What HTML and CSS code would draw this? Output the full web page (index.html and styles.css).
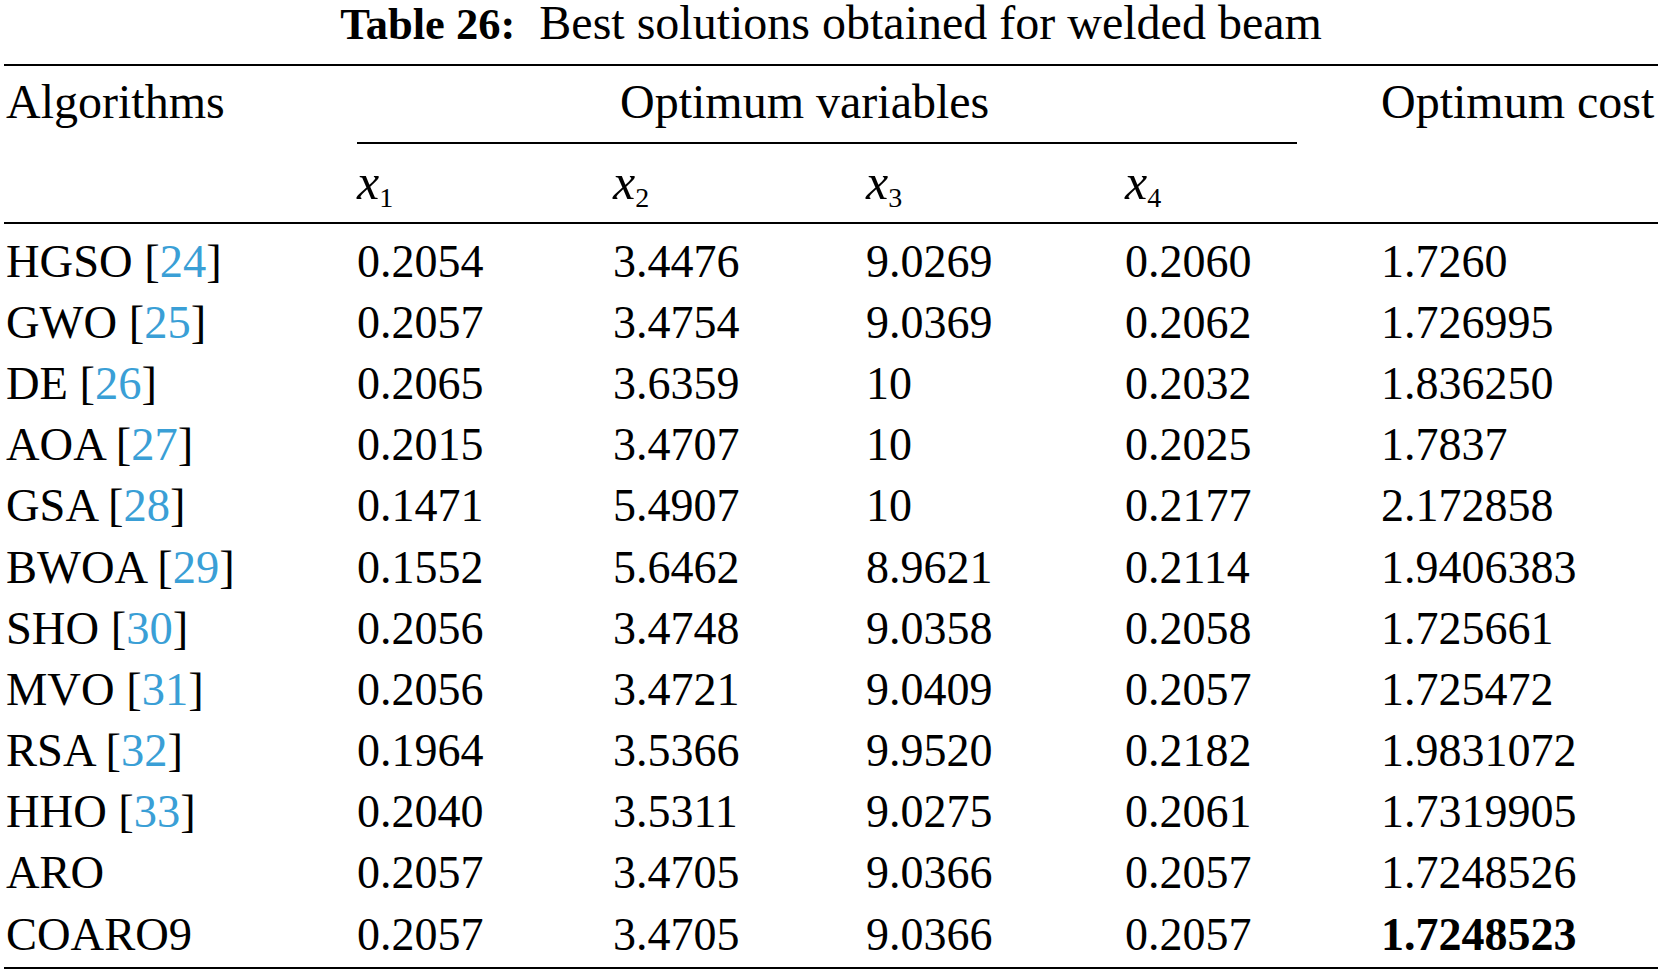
FILE: index.html
```html
<!DOCTYPE html>
<html lang="en">
<head>
<meta charset="utf-8">
<title>Table 26: Best solutions obtained for welded beam</title>
<link rel="stylesheet" href="styles.css">
</head>
<body>
<div class="page">
  <div class="caption"><span class="cap-label">Table 26:</span><span class="cap-text">Best solutions obtained for welded beam</span></div>
  <div class="rule"></div>
  <div class="head">
    <div class="h-alg">Algorithms</div>
    <div class="h-vars">Optimum variables</div>
    <div class="h-cost">Optimum cost</div>
    <div class="h-mid"></div>
    <div class="h-x"><i>x</i><sub>1</sub></div>
    <div class="h-x"><i>x</i><sub>2</sub></div>
    <div class="h-x"><i>x</i><sub>3</sub></div>
    <div class="h-x"><i>x</i><sub>4</sub></div>
  </div>
  <div class="rule"></div>
  <div class="body">
    <div class="alg">HGSO [<a class="ref">24</a>]</div><div>0.2054</div><div>3.4476</div><div>9.0269</div><div>0.2060</div><div>1.7260</div>
    <div class="alg">GWO [<a class="ref">25</a>]</div><div>0.2057</div><div>3.4754</div><div>9.0369</div><div>0.2062</div><div>1.726995</div>
    <div class="alg">DE [<a class="ref">26</a>]</div><div>0.2065</div><div>3.6359</div><div>10</div><div>0.2032</div><div>1.836250</div>
    <div class="alg">AOA [<a class="ref">27</a>]</div><div>0.2015</div><div>3.4707</div><div>10</div><div>0.2025</div><div>1.7837</div>
    <div class="alg">GSA [<a class="ref">28</a>]</div><div>0.1471</div><div>5.4907</div><div>10</div><div>0.2177</div><div>2.172858</div>
    <div class="alg">BWOA [<a class="ref">29</a>]</div><div>0.1552</div><div>5.6462</div><div>8.9621</div><div>0.2114</div><div>1.9406383</div>
    <div class="alg">SHO [<a class="ref">30</a>]</div><div>0.2056</div><div>3.4748</div><div>9.0358</div><div>0.2058</div><div>1.725661</div>
    <div class="alg">MVO [<a class="ref">31</a>]</div><div>0.2056</div><div>3.4721</div><div>9.0409</div><div>0.2057</div><div>1.725472</div>
    <div class="alg">RSA [<a class="ref">32</a>]</div><div>0.1964</div><div>3.5366</div><div>9.9520</div><div>0.2182</div><div>1.9831072</div>
    <div class="alg">HHO [<a class="ref">33</a>]</div><div>0.2040</div><div>3.5311</div><div>9.0275</div><div>0.2061</div><div>1.7319905</div>
    <div class="alg">ARO</div><div>0.2057</div><div>3.4705</div><div>9.0366</div><div>0.2057</div><div>1.7248526</div>
    <div class="alg">COARO9</div><div>0.2057</div><div>3.4705</div><div>9.0366</div><div>0.2057</div><div class="best">1.7248523</div>
  </div>
  <div class="rule"></div>
</div>
</body>
</html>
```

FILE: styles.css
```css
html, body {
  margin: 0;
  padding: 0;
  background: #ffffff;
}

body {
  font-family: "Liberation Serif", "Times New Roman", serif;
  color: #000000;
}

.page {
  width: 1654px;
  margin: 0 4px;
}

.caption {
  font-size: 48px;
  line-height: 44px;
  height: 44px;
  padding-top: 1px;
  text-align: center;
  white-space: nowrap;
  margin-bottom: 19px;
}

.cap-label {
  font-weight: bold;
  font-size: 44.5px;
  margin-right: 24px;
}

.rule {
  height: 2px;
  background: #000000;
}

.head,
.body {
  display: grid;
  grid-template-columns: 353px 256px 253px 259px 256px 1fr;
}

.head {
  font-size: 48px;
  line-height: 46px;
  grid-template-rows: 76px 2px 78px;
  white-space: nowrap;
}

.h-alg {
  grid-column: 1;
  grid-row: 1 / 4;
  padding: 13px 0 0 2px;
}

.h-vars {
  grid-column: 2 / 6;
  grid-row: 1;
  padding: 13px 0 0 263px;
}

.h-cost {
  grid-column: 6;
  grid-row: 1;
  padding-top: 13px;
}

.h-mid {
  grid-column: 2 / 6;
  grid-row: 2;
  background: #000000;
  margin-right: 84px;
}

.h-x {
  grid-row: 3;
  padding-top: 15px;
  font-size: 50px;
}

.h-x sub {
  font-size: 28px;
  line-height: 0;
  vertical-align: -8px;
}

.body {
  font-size: 46px;
  grid-auto-rows: 61.2px;
  line-height: 61.2px;
  padding: 6.6px 0 2px;
  white-space: nowrap;
}

.alg {
  padding-left: 2px;
  font-size: 46.5px;
}

.ref {
  color: #3a9fd6;
  text-decoration: none;
}

.best {
  font-weight: bold;
}
```
